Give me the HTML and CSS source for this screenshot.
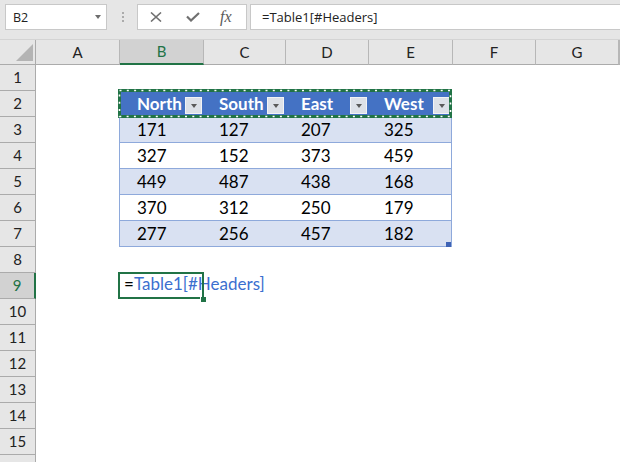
FILE: index.html
```html
<!DOCTYPE html>
<html>
<head>
<meta charset="utf-8">
<link rel="stylesheet" href="styles.css">
</head>
<body>
<div class="app">
  <div class="fbar">
    <div class="namebox"><span>B2</span><span class="caret"></span></div>
    <div class="grip"><i></i><i></i><i></i></div>
    <div class="fbtns">
      <svg class="ic-x" width="12" height="10" viewBox="0 0 12 10"><path d="M1 0.5 L11 9.5 M11 0.5 L1 9.5" stroke="#707070" stroke-width="1.6" fill="none"/></svg>
      <svg class="ic-ok" width="14" height="10" viewBox="0 0 14 10"><path d="M1 4.5 L5 8.5 L13 1" stroke="#707070" stroke-width="2.2" fill="none"/></svg>
      <span class="fx">fx</span>
    </div>
    <div class="finput">=Table1[#Headers]</div>
  </div>
  <div class="colheads">
    <div class="corner"><svg width="35" height="24" viewBox="0 0 35 24"><polygon points="33,4 33,21 16,21" fill="#B4B4B4"/></svg></div>
    <div class="ch">A</div>
    <div class="ch sel">B</div>
    <div class="ch">C</div>
    <div class="ch">D</div>
    <div class="ch">E</div>
    <div class="ch">F</div>
    <div class="ch">G</div>
    <div class="ch"></div>
  </div>
  <div class="body">
    <div class="rowheads">
      <div class="rh">1</div>
      <div class="rh">2</div>
      <div class="rh">3</div>
      <div class="rh">4</div>
      <div class="rh">5</div>
      <div class="rh">6</div>
      <div class="rh">7</div>
      <div class="rh">8</div>
      <div class="rh sel">9</div>
      <div class="rh">10</div>
      <div class="rh">11</div>
      <div class="rh">12</div>
      <div class="rh">13</div>
      <div class="rh">14</div>
      <div class="rh">15</div>
      <div class="rh"></div>
    </div>
    <div class="cells">
      <div class="blank-row"></div>
      <div class="xtable">
        <div class="tr head">
          <div class="c c1">North<span class="dd"></span></div>
          <div class="c c2">South<span class="dd"></span></div>
          <div class="c c3">East<span class="dd"></span></div>
          <div class="c c4">West<span class="dd"></span></div>
        </div>
        <div class="tr band">
          <div class="c c1">171</div><div class="c c2">127</div><div class="c c3">207</div><div class="c c4">325</div>
        </div>
        <div class="tr">
          <div class="c c1">327</div><div class="c c2">152</div><div class="c c3">373</div><div class="c c4">459</div>
        </div>
        <div class="tr band">
          <div class="c c1">449</div><div class="c c2">487</div><div class="c c3">438</div><div class="c c4">168</div>
        </div>
        <div class="tr">
          <div class="c c1">370</div><div class="c c2">312</div><div class="c c3">250</div><div class="c c4">179</div>
        </div>
        <div class="tr band">
          <div class="c c1">277</div><div class="c c2">256</div><div class="c c3">457</div><div class="c c4">182</div>
        </div>
        <svg class="ants" width="334" height="29" viewBox="0 0 334 29">
          <rect x="1.5" y="1.5" width="331" height="26" fill="none" stroke="#217346" stroke-width="3"/>
          <rect x="1.5" y="1.5" width="331" height="26" fill="none" stroke="#ffffff" stroke-width="1.6" stroke-dasharray="2 5.3"/>
        </svg>
        <span class="resize"></span>
      </div>
      <div class="blank-row"></div>
      <div class="editrow"><span class="eq">=</span>Table1[#Headers]<span class="selbox"></span><span class="handle"></span></div>
    </div>
  </div>
</div>
</body>
</html>
```
FILE: styles.css
```css
* { box-sizing: border-box; margin: 0; padding: 0; }
html, body { width: 620px; height: 462px; overflow: hidden; background: #fff; }
body { font-family: Lato, "Liberation Sans", sans-serif; color: #000; }

.app { width: 620px; height: 462px; overflow: hidden; display: flex; flex-direction: column; }

/* formula bar */
.fbar { height: 39px; flex: none; background: #E6E6E6; display: flex; align-items: flex-start; padding: 4px 0 0 5px; }
.namebox { width: 102px; height: 26px; flex: none; background: #fff; border: 1px solid #C8C8C8; display: flex; align-items: center; justify-content: space-between; padding: 0 5px 0 7px; font-family: "Open Sans", sans-serif; font-size: 12.5px; color: #222; }
.caret { width: 0; height: 0; border-left: 3.5px solid transparent; border-right: 3.5px solid transparent; border-top: 4px solid #6D6D6D; }
.grip { display: flex; flex-direction: column; gap: 2px; margin: 8px 0 0 15px; flex: none; }
.grip i { display: block; width: 2px; height: 2px; background: #ABABAB; }
.fbtns { width: 110px; height: 26px; flex: none; margin-left: 13px; background: #fff; border: 1px solid #C8C8C8; display: flex; align-items: center; }
.ic-x { margin-left: 12px; display: block; }
.ic-ok { margin-left: 24px; display: block; }
.fx { margin-left: 20px; font-family: "Liberation Serif", serif; font-style: italic; font-size: 16px; color: #5A5A5A; line-height: 1; }
.finput { width: 380px; height: 26px; flex: none; margin-left: 3px; background: #fff; border: 1px solid #C8C8C8; border-right: none; padding-left: 11px; font-family: "Open Sans", sans-serif; font-size: 13px; line-height: 24px; color: #222; white-space: nowrap; }

/* column headers */
.colheads { height: 26px; flex: none; display: grid; grid-template-columns: 36px 84px 84px 82px 83px 84px 83px 83px 1fr; background: #E6E6E6; border-top: 1px solid #D4D4D4; }
.corner { border-right: 1px solid #ABABAB; border-bottom: 1px solid #ABABAB; }
.corner svg { display: block; }
.ch { border-right: 1px solid #B7B7B7; border-bottom: 1px solid #ABABAB; text-align: center; font-size: 15px; line-height: 24px; color: #222; }
.ch.sel { background: #D2D2D2; color: #217346; border-bottom: 2px solid #217346; line-height: 23px; }

/* body */
.body { flex: 1; display: flex; min-height: 0; }
.rowheads { width: 36px; flex: none; background: #E6E6E6; border-right: 1px solid #ABABAB; }
.rh { height: 26px; border-bottom: 1px solid #ABABAB; text-align: center; font-size: 15px; line-height: 25px; color: #222; }
.rh.sel { background: #D2D2D2; color: #217346; margin-right: -1px; border-right: 2px solid #217346; }
.cells { flex: 1; }
.blank-row { height: 26px; }

/* excel table */
.xtable { position: relative; margin-left: 83px; width: 333px; border-left: 1px solid #8EA9DB; border-right: 1px solid #8EA9DB; }
.tr { display: flex; height: 26px; border-bottom: 1px solid #8EA9DB; }
.tr.band { background: #D9E1F2; }
.tr.head { background: #4472C4; border-bottom: none; color: #fff; font-weight: 700; }
.c { padding-left: 16px; font-size: 17px; line-height: 25px; white-space: nowrap; }
.tr.head .c { line-height: 26px; display: flex; justify-content: space-between; align-items: flex-start; }
.c1 { width: 83px; padding-left: 17px; }
.c2 { width: 82px; }
.c3 { width: 83px; }
.c4 { width: 83px; }
.dd { width: 17px; height: 17px; margin: 6px 1px 0 0; background: #DDE1E8; border: 1px solid #F2F3F6; display: flex; align-items: center; justify-content: center; }
.dd::after { content: ""; width: 0; height: 0; border-left: 3.5px solid transparent; border-right: 3.5px solid transparent; border-top: 4px solid #5A5A5A; margin-top: 1px; }
.ants { position: absolute; left: -2px; top: -2px; display: block; }
.resize { position: absolute; right: 0; bottom: 0; width: 5px; height: 5px; background: #3F63B5; }

/* edited cell B9 */
.editrow { position: relative; margin-left: 83px; height: 26px; padding-left: 5px; font-size: 17px; line-height: 21px; color: #3B6FCF; white-space: nowrap; }
.eq { color: #000; }
.selbox { position: absolute; left: -1px; top: -1px; width: 86px; height: 27px; border: 2px solid #217346; }
.handle { position: absolute; left: 81px; top: 24px; width: 6px; height: 5px; background: #217346; border-left: 1px solid #fff; }
```
